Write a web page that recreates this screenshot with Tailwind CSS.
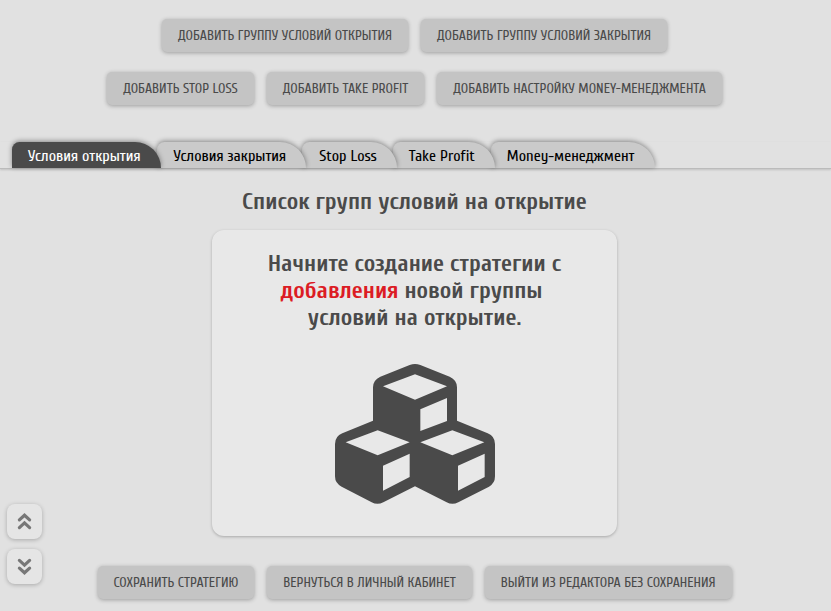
<!DOCTYPE html>
<html lang="ru">
<head>
    <meta charset="UTF-8">
    <meta name="viewport" content="width=device-width, initial-scale=1.0">
    <title>Редактор стратегии</title>
    <script src="https://cdn.jsdelivr.net/npm/@tailwindcss/browser@4"></script>
</head>
<body class="min-h-screen bg-[#e1e1e1] text-[#4a4a4a] font-['Cuprum','Liberation_Sans_Narrow','Roboto_Condensed','Roboto',sans-serif]">
    <!-- Add buttons -->
    <div class="pt-[19px] pr-0.5 flex flex-col gap-5">
        <div class="flex flex-wrap justify-center gap-[13px]">
            <button type="button" class="h-[33px] px-4 rounded-[5px] bg-[#c4c4c4] text-sm uppercase shadow-[0_1px_4px_rgba(0,0,0,0.3)]">Добавить группу условий открытия</button>
            <button type="button" class="h-[33px] px-4 rounded-[5px] bg-[#c4c4c4] text-sm uppercase shadow-[0_1px_4px_rgba(0,0,0,0.3)]">Добавить группу условий закрытия</button>
        </div>
        <div class="flex flex-wrap justify-center gap-[13px]">
            <button type="button" class="h-[33px] px-4 rounded-[5px] bg-[#c4c4c4] text-sm uppercase shadow-[0_1px_4px_rgba(0,0,0,0.3)]">Добавить Stop Loss</button>
            <button type="button" class="h-[33px] px-4 rounded-[5px] bg-[#c4c4c4] text-sm uppercase shadow-[0_1px_4px_rgba(0,0,0,0.3)]">Добавить Take Profit</button>
            <button type="button" class="h-[33px] px-4 rounded-[5px] bg-[#c4c4c4] text-sm uppercase shadow-[0_1px_4px_rgba(0,0,0,0.3)]">Добавить настройку Money-менеджмента</button>
        </div>
    </div>

    <!-- Tabs -->
    <nav class="mt-[37px] pl-3 flex text-base leading-6 text-black border-b border-[#bbb] shadow-[0_1px_2px_rgba(0,0,0,0.15)]">
        <a href="#open" class="relative z-50 pt-0.5 pl-4 pr-5 rounded-tl-lg rounded-tr-[28px] bg-[#4a4a4a] text-white shadow-[0_-1px_5px_rgba(0,0,0,0.4)]">Условия открытия</a>
        <a href="#close" class="relative z-40 -ml-1 pt-0.5 pl-[17px] pr-5 rounded-tl-lg rounded-tr-[28px] bg-[#cacaca] shadow-[0_-1px_5px_rgba(0,0,0,0.4)]">Условия закрытия</a>
        <a href="#stop-loss" class="relative z-30 -ml-1 pt-0.5 pl-[17px] pr-5 rounded-tl-lg rounded-tr-[28px] bg-[#cacaca] shadow-[0_-1px_5px_rgba(0,0,0,0.4)]">Stop Loss</a>
        <a href="#take-profit" class="relative z-20 -ml-1 pt-0.5 pl-4 pr-5 rounded-tl-lg rounded-tr-[28px] bg-[#cacaca] shadow-[0_-1px_5px_rgba(0,0,0,0.4)]">Take Profit</a>
        <a href="#money" class="relative z-10 -ml-1 pt-0.5 pl-4 pr-5 rounded-tl-lg rounded-tr-[28px] bg-[#cacaca] shadow-[0_-1px_5px_rgba(0,0,0,0.4)]">Money-менеджмент</a>
    </nav>

    <main id="open" class="pt-[19px] pr-0.5 flex flex-col items-center text-center text-2xl leading-[27px] font-bold">
        <h1>Список групп условий на открытие</h1>
        <section class="mt-[15px] w-full max-w-[405px] rounded-xl bg-[#e8e8e8] pt-5 pb-8 flex flex-col items-center shadow-[0_1px_3px_rgba(0,0,0,0.25)]">
            <p class="max-w-[320px]">Начните создание стратегии с <span class="text-[#dc1c24]">добавления</span> новой группы&nbsp; условий на открытие.</p>
            <svg class="mt-[33px] w-40 h-[140px]" viewBox="0 0 480 420" fill="#4a4a4a" fill-rule="evenodd" aria-hidden="true">
                <path d="M240 0Q248 0 256 3L344 38Q366 48 366 70V170L458 208Q480 217 480 240V337Q480 358 462 368L370 415Q352 424 335 415L240 367L145 415Q127 424 110 415L20 368Q0 358 0 337V240Q0 217 22 208L114 170V70Q114 48 136 38L224 3Q232 0 240 0Z
                    M144 67L240 107L336 67L240 31Z M256 136V201L336 171V102Z
                    M32 235L128 274L224 235L128 199Z M144 305V380L224 339V269Z
                    M256 235L352 274L448 235L352 199Z M369 305V380L449 339V269Z"/>
            </svg>
        </section>
    </main>

    <!-- Bottom actions -->
    <div class="mt-[30px] pr-0.5 pb-3 flex flex-wrap justify-center gap-[13px]">
        <button type="button" class="h-[33px] px-4 rounded-[5px] bg-[#c4c4c4] text-sm uppercase shadow-[0_1px_4px_rgba(0,0,0,0.3)]">Сохранить стратегию</button>
        <button type="button" class="h-[33px] px-4 rounded-[5px] bg-[#c4c4c4] text-sm uppercase shadow-[0_1px_4px_rgba(0,0,0,0.3)]">Вернуться в личный кабинет</button>
        <button type="button" class="h-[33px] px-4 rounded-[5px] bg-[#c4c4c4] text-sm uppercase shadow-[0_1px_4px_rgba(0,0,0,0.3)]">Выйти из редактора без сохранения</button>
    </div>

    <!-- Scroll buttons -->
    <div class="fixed left-[7px] bottom-[27px] flex flex-col gap-2.5">
        <button type="button" aria-label="Вверх" class="size-[35px] rounded-lg bg-[#e5e5e5] flex items-center justify-center shadow-[0_1px_4px_rgba(0,0,0,0.25)]">
            <svg class="w-[17px] h-[17px]" viewBox="0 0 17 17" fill="none" stroke="#777" stroke-width="3.2" stroke-linecap="round"><path d="M3.4 6.9L8.5 2.2L13.6 6.9M3.4 14.6L8.5 9.9L13.6 14.6"/></svg>
        </button>
        <button type="button" aria-label="Вниз" class="size-[35px] rounded-lg bg-[#e5e5e5] flex items-center justify-center shadow-[0_1px_4px_rgba(0,0,0,0.25)]">
            <svg class="w-[17px] h-[17px]" viewBox="0 0 17 17" fill="none" stroke="#777" stroke-width="3.2" stroke-linecap="round"><path d="M3.4 2.4L8.5 7.1L13.6 2.4M3.4 10.1L8.5 14.8L13.6 10.1"/></svg>
        </button>
    </div>
</body>
</html>
